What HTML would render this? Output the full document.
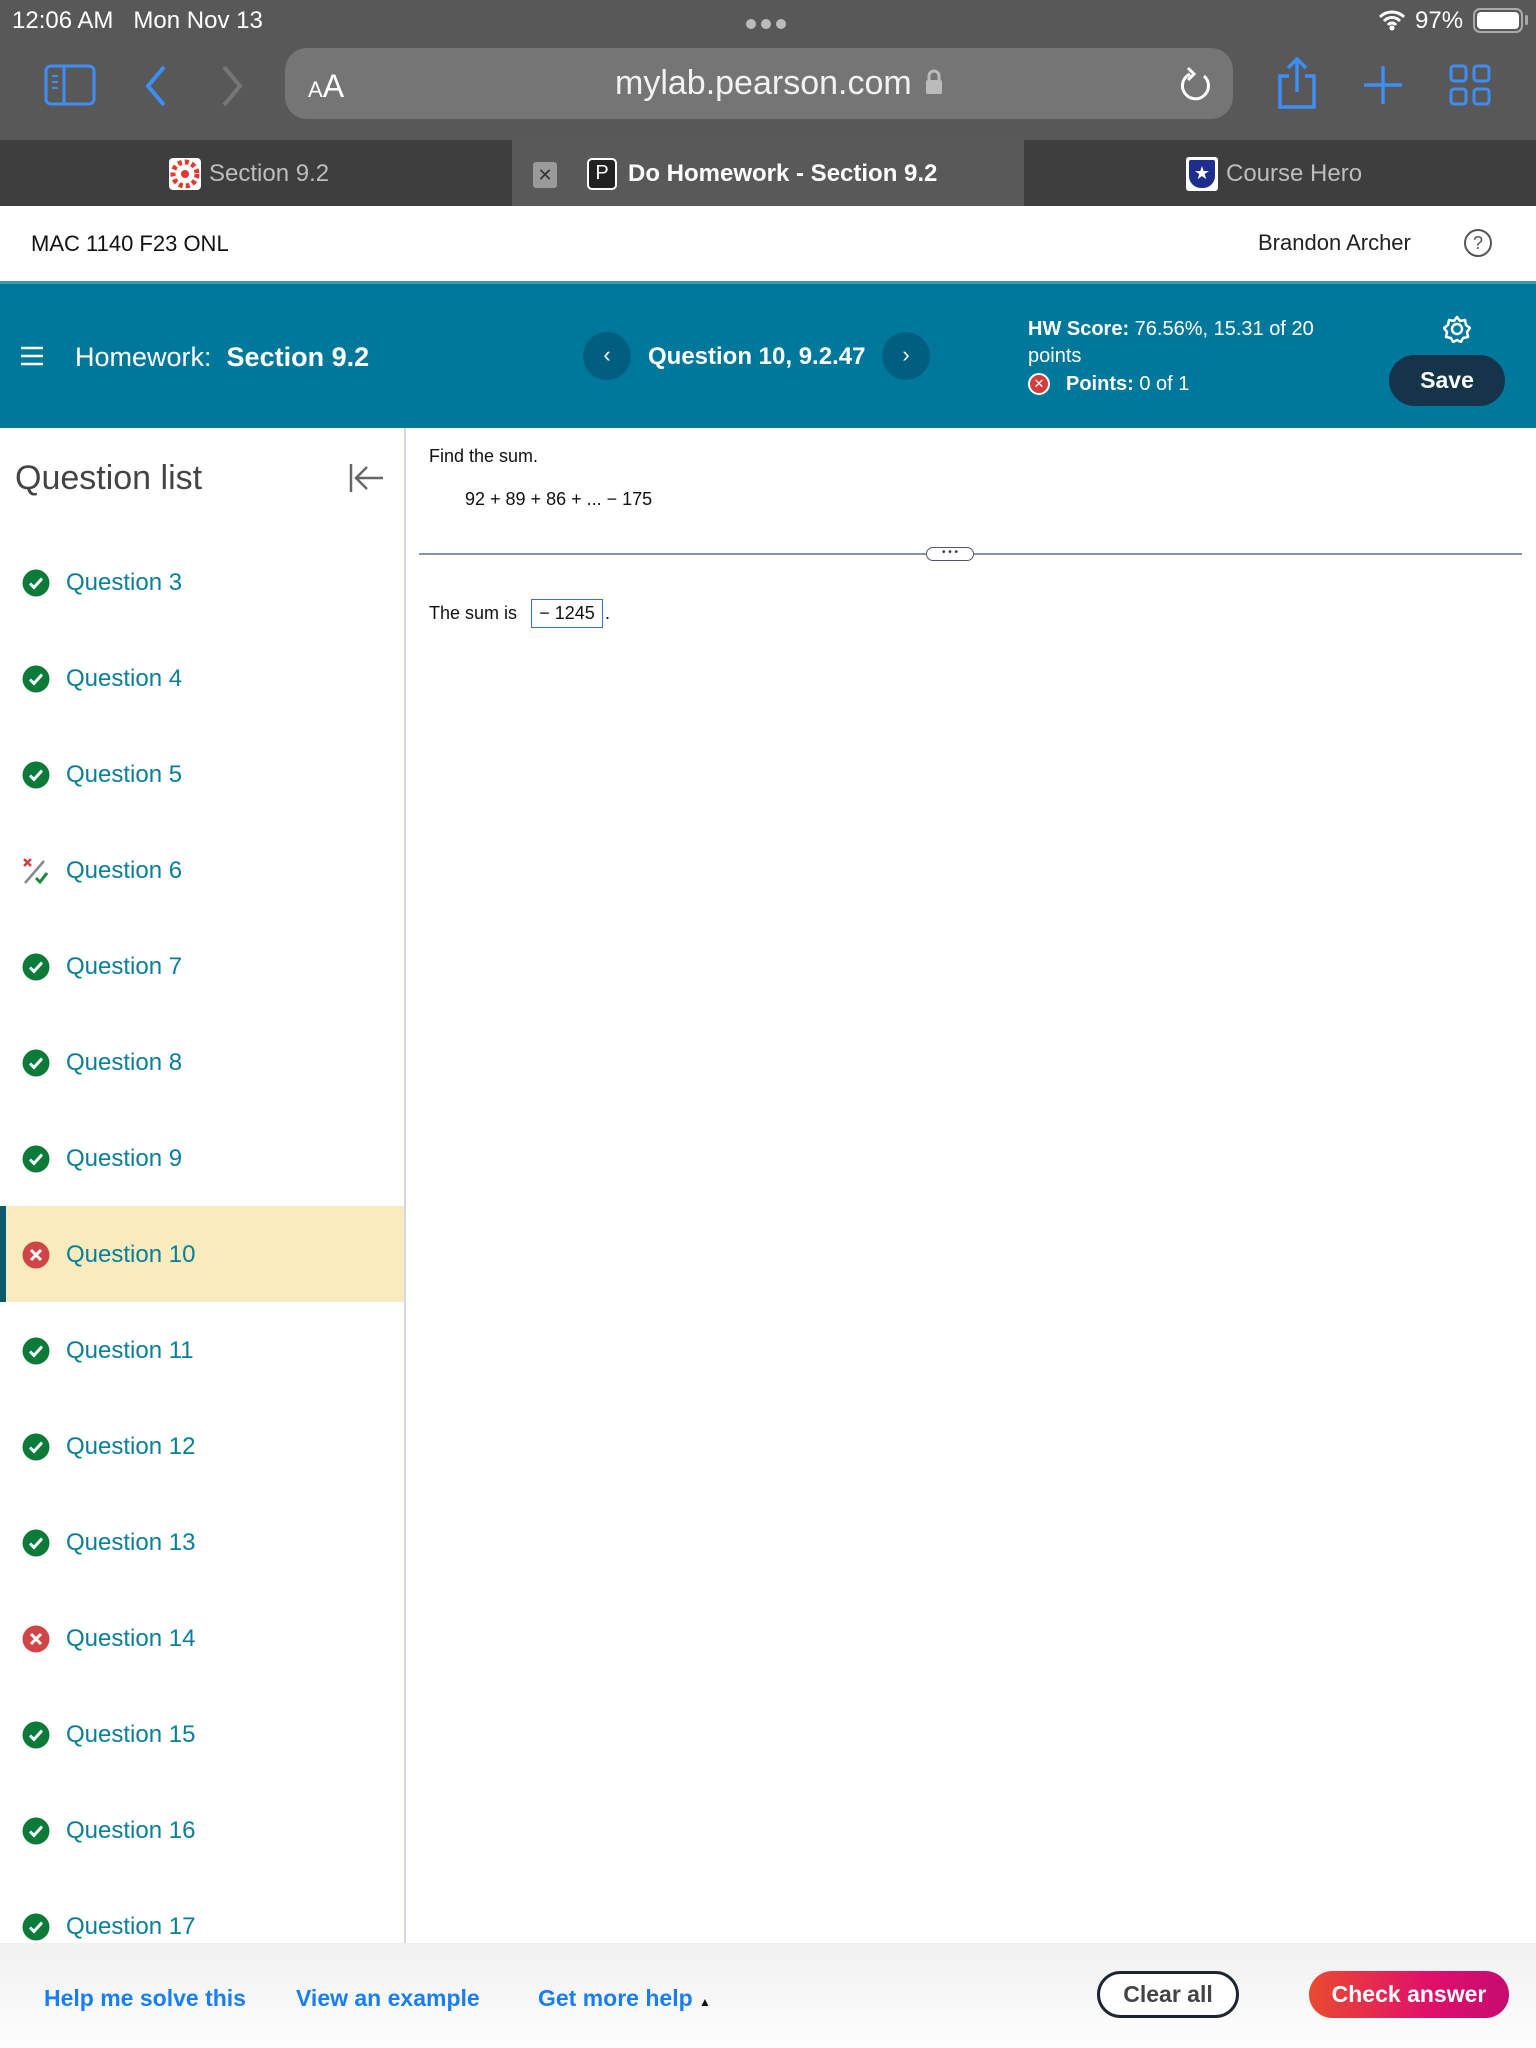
<!DOCTYPE html>
<html><head><meta charset="utf-8"><style>
*{margin:0;padding:0;box-sizing:border-box}
body{width:1536px;height:2048px;position:relative;overflow:hidden;background:#fff;font-family:"Liberation Sans",sans-serif}
.a{position:absolute;white-space:nowrap}
.q{position:absolute;left:0;width:404px;height:96px}
.q .t{position:absolute;left:66px;top:33px;font-size:24px;color:#0a7d9c;line-height:30px}
.q svg{position:absolute;left:22px;top:34px}
</style></head><body>
<div class="a" style="left:0;top:0;width:1536px;height:140px;background:#585858"></div>
<div class="a" style="left:12px;top:6px;font-size:24px;color:#fff;line-height:30px">12:06 AM&nbsp;&nbsp;&nbsp;Mon Nov 13</div>
<div class="a" style="left:746px;top:19px;width:44px;height:10px">
<span class="a" style="left:0;top:0;width:10px;height:10px;border-radius:5px;background:#bbb"></span>
<span class="a" style="left:15px;top:0;width:10px;height:10px;border-radius:5px;background:#bbb"></span>
<span class="a" style="left:30px;top:0;width:10px;height:10px;border-radius:5px;background:#bbb"></span></div>
<svg class="a" style="left:1378px;top:9px" width="28" height="22" viewBox="0 0 28 22"><path d="M2 8a17 17 0 0 1 24 0M6 12a11 11 0 0 1 16 0M10 16a5 5 0 0 1 8 0" stroke="#fff" stroke-width="3" fill="none"/><circle cx="14" cy="19" r="2.5" fill="#fff"/></svg>
<div class="a" style="left:1415px;top:6px;font-size:24px;color:#fff;line-height:30px">97%</div>
<div class="a" style="left:1473px;top:8px;width:50px;height:25px;border:2px solid #aaa;border-radius:7px"><div style="margin:2px;width:42px;height:17px;background:#fff;border-radius:4px"></div></div>
<div class="a" style="left:1525px;top:15px;width:3px;height:10px;background:#aaa;border-radius:2px"></div>
<svg class="a" style="left:44px;top:64px" width="52" height="42" viewBox="0 0 52 42"><rect x="2" y="2" width="48" height="38" rx="5" fill="none" stroke="#3e8ef7" stroke-width="3"/><line x1="20" y1="2" x2="20" y2="40" stroke="#3e8ef7" stroke-width="3"/><path d="M8 12h6M8 18h6M8 24h6" stroke="#3e8ef7" stroke-width="2"/></svg>
<svg class="a" style="left:140px;top:64px" width="30" height="44"><path d="M24 3L8 22l16 19" stroke="#3e8ef7" stroke-width="4" fill="none"/></svg>
<svg class="a" style="left:218px;top:64px" width="30" height="44"><path d="M6 3l16 19L6 41" stroke="#777" stroke-width="4" fill="none"/></svg>
<div class="a" style="left:285px;top:48px;width:948px;height:71px;background:#757575;border-radius:22px"></div>
<div class="a" style="left:308px;top:66px;color:#fff;line-height:40px"><span style="font-size:22px">A</span><span style="font-size:32px">A</span></div>
<div class="a" style="left:615px;top:62px;font-size:34px;color:#f2f2f2;line-height:42px">mylab.pearson.com</div>
<svg class="a" style="left:925px;top:68px" width="18" height="28"><path d="M4 12V8a5 5 0 0 1 10 0v4" stroke="#bbb" stroke-width="3" fill="none"/><rect x="1" y="12" width="16" height="14" rx="2" fill="#bbb"/></svg>
<svg class="a" style="left:1178px;top:64px" width="36" height="40" viewBox="0 0 36 40"><path d="M26 12A13 13 0 1 1 12 10" stroke="#fff" stroke-width="3" fill="none"/><path d="M10 4l6 6-6 6" stroke="#fff" stroke-width="3" fill="none"/></svg>
<svg class="a" style="left:1276px;top:56px" width="42" height="54" viewBox="0 0 42 54"><path d="M13 20H4v31h34V20h-9M21 36V3M12 12l9-9 9 9" stroke="#3e8ef7" stroke-width="3.5" fill="none"/></svg>
<svg class="a" style="left:1362px;top:64px" width="42" height="42"><path d="M21 2v38M2 21h38" stroke="#3e8ef7" stroke-width="3.5"/></svg>
<svg class="a" style="left:1449px;top:64px" width="42" height="42"><g fill="none" stroke="#3e8ef7" stroke-width="3"><rect x="2" y="2" width="15" height="15" rx="3"/><rect x="25" y="2" width="15" height="15" rx="3"/><rect x="2" y="25" width="15" height="15" rx="3"/><rect x="25" y="25" width="15" height="15" rx="3"/></g></svg>
<div class="a" style="left:0;top:140px;width:1536px;height:66px;background:#3e3e3e"></div>
<div class="a" style="left:512px;top:140px;width:512px;height:66px;background:#595959"></div>
<div class="a" style="left:169px;top:158px;width:32px;height:32px;background:#fff;border-radius:4px"><svg width="32" height="32"><circle cx="16" cy="16" r="12" fill="none" stroke="#e03a2f" stroke-width="5" stroke-dasharray="4 3"/><circle cx="16" cy="16" r="4" fill="#e03a2f"/></svg></div>
<div class="a" style="left:209px;top:159px;font-size:24px;color:#bdbdbd;line-height:30px">Section 9.2</div>
<div class="a" style="left:533px;top:162px;width:24px;height:26px;background:#9a9a9a;border-radius:3px;color:#333;font-size:18px;text-align:center;line-height:26px">✕</div>
<div class="a" style="left:587px;top:158px;width:30px;height:32px;border:2.5px solid #fff;border-radius:5px;background:#222;color:#fff;font-size:20px;text-align:center;line-height:27px">P</div>
<div class="a" style="left:628px;top:159px;font-size:24px;font-weight:bold;color:#fff;line-height:30px">Do Homework - Section 9.2</div>
<div class="a" style="left:1186px;top:157px;width:32px;height:34px;background:#fff;border-radius:3px"><div style="margin:3px;width:26px;height:28px;background:#1d2e8c;border-radius:2px 2px 12px 12px;color:#fff;font-size:18px;text-align:center;line-height:26px">★</div></div>
<div class="a" style="left:1226px;top:159px;font-size:24px;color:#bdbdbd;line-height:30px">Course Hero</div>
<div class="a" style="left:31px;top:230px;font-size:22px;color:#111;line-height:28px">MAC 1140 F23 ONL</div>
<div class="a" style="left:1258px;top:229px;font-size:22px;color:#222;line-height:28px">Brandon Archer</div>
<div class="a" style="left:1464px;top:229px;width:28px;height:28px;border:2px solid #555;border-radius:50%;font-size:18px;color:#555;text-align:center;line-height:24px">?</div>
<div class="a" style="left:0;top:281px;width:1536px;height:147px;background:#00789c;border-top:3px solid #3a9ab8"></div>
<svg class="a" style="left:21px;top:345px" width="22" height="22"><path d="M0 3h22M0 11h22M0 19h22" stroke="#fff" stroke-width="2.5"/></svg>
<div class="a" style="left:75px;top:341px;font-size:27px;color:#fff;line-height:32px">Homework:&nbsp; <b>Section 9.2</b></div>
<div class="a" style="left:583px;top:332px;width:48px;height:48px;border-radius:50%;background:#005f80;color:#fff;font-size:22px;text-align:center;line-height:46px">‹</div>
<div class="a" style="left:648px;top:341px;font-size:24px;font-weight:bold;color:#fff;line-height:32px">Question 10, 9.2.47</div>
<div class="a" style="left:882px;top:332px;width:48px;height:48px;border-radius:50%;background:#005f80;color:#fff;font-size:22px;text-align:center;line-height:46px">›</div>
<div class="a" style="left:1028px;top:316px;font-size:20px;color:#fff;line-height:26px"><b>HW Score:</b> 76.56%, 15.31 of 20</div>
<div class="a" style="left:1028px;top:343px;font-size:20px;color:#fff;line-height:26px">points</div>
<div class="a" style="left:1028px;top:373px;width:22px;height:22px;border-radius:50%;background:#d43d3d;border:2px solid #fff;color:#fff;font-size:13px;text-align:center;line-height:18px">✕</div>
<div class="a" style="left:1066px;top:371px;font-size:20px;color:#fff;line-height:26px"><b>Points:</b> 0 of 1</div>
<svg class="a" style="left:1443px;top:315px" width="28" height="28" viewBox="0 0 28 28"><circle cx="14" cy="14" r="5" fill="none" stroke="#fff" stroke-width="2.5"/><path d="M14 2l3 4 5-1 1 5 4 3-3 4 1 5-5 1-2 4-4-2-4 2-2-4-5-1 1-5-3-4 4-3 1-5 5 1z" fill="none" stroke="#fff" stroke-width="2.5" stroke-linejoin="round"/></svg>
<div class="a" style="left:1389px;top:355px;width:116px;height:51px;border-radius:26px;background:#15344a;color:#fff;font-size:23px;font-weight:bold;text-align:center;line-height:51px">Save</div>
<div class="a" style="left:404px;top:428px;width:2px;height:1515px;background:#d2d8e4"></div>
<div class="a" style="left:15px;top:457px;font-size:34px;color:#444;line-height:42px">Question list</div>
<svg class="a" style="left:349px;top:462px" width="36" height="32"><path d="M2 2v28M34 16H8M18 5L7 16l11 11" stroke="#666" stroke-width="2.5" fill="none"/></svg>
<div class="a" style="left:0;top:1206px;width:404px;height:96px;background:#f8ebbd;border-left:6px solid #0b5a72"></div>
<div class="q" style="top:535px"><svg width="28" height="28"><circle cx="14" cy="14" r="13.5" fill="#0d7a3a"/><path d="M8 14.5l4 4 8-9" stroke="#fff" stroke-width="3" fill="none"/></svg><div class="t">Question 3</div></div>
<div class="q" style="top:631px"><svg width="28" height="28"><circle cx="14" cy="14" r="13.5" fill="#0d7a3a"/><path d="M8 14.5l4 4 8-9" stroke="#fff" stroke-width="3" fill="none"/></svg><div class="t">Question 4</div></div>
<div class="q" style="top:727px"><svg width="28" height="28"><circle cx="14" cy="14" r="13.5" fill="#0d7a3a"/><path d="M8 14.5l4 4 8-9" stroke="#fff" stroke-width="3" fill="none"/></svg><div class="t">Question 5</div></div>
<div class="q" style="top:823px"><svg width="28" height="28"><path d="M2 2l7 7M9 2L2 9" stroke="#d43d3d" stroke-width="2.5"/><path d="M3 26L22 4" stroke="#888" stroke-width="2.5"/><path d="M14 21l4 4 7-9" stroke="#1a8a3a" stroke-width="3" fill="none"/></svg><div class="t">Question 6</div></div>
<div class="q" style="top:919px"><svg width="28" height="28"><circle cx="14" cy="14" r="13.5" fill="#0d7a3a"/><path d="M8 14.5l4 4 8-9" stroke="#fff" stroke-width="3" fill="none"/></svg><div class="t">Question 7</div></div>
<div class="q" style="top:1015px"><svg width="28" height="28"><circle cx="14" cy="14" r="13.5" fill="#0d7a3a"/><path d="M8 14.5l4 4 8-9" stroke="#fff" stroke-width="3" fill="none"/></svg><div class="t">Question 8</div></div>
<div class="q" style="top:1111px"><svg width="28" height="28"><circle cx="14" cy="14" r="13.5" fill="#0d7a3a"/><path d="M8 14.5l4 4 8-9" stroke="#fff" stroke-width="3" fill="none"/></svg><div class="t">Question 9</div></div>
<div class="q" style="top:1207px"><svg width="28" height="28"><circle cx="14" cy="14" r="13.5" fill="#d04545"/><path d="M9 9l10 10M19 9L9 19" stroke="#fff" stroke-width="3"/></svg><div class="t">Question 10</div></div>
<div class="q" style="top:1303px"><svg width="28" height="28"><circle cx="14" cy="14" r="13.5" fill="#0d7a3a"/><path d="M8 14.5l4 4 8-9" stroke="#fff" stroke-width="3" fill="none"/></svg><div class="t">Question 11</div></div>
<div class="q" style="top:1399px"><svg width="28" height="28"><circle cx="14" cy="14" r="13.5" fill="#0d7a3a"/><path d="M8 14.5l4 4 8-9" stroke="#fff" stroke-width="3" fill="none"/></svg><div class="t">Question 12</div></div>
<div class="q" style="top:1495px"><svg width="28" height="28"><circle cx="14" cy="14" r="13.5" fill="#0d7a3a"/><path d="M8 14.5l4 4 8-9" stroke="#fff" stroke-width="3" fill="none"/></svg><div class="t">Question 13</div></div>
<div class="q" style="top:1591px"><svg width="28" height="28"><circle cx="14" cy="14" r="13.5" fill="#d04545"/><path d="M9 9l10 10M19 9L9 19" stroke="#fff" stroke-width="3"/></svg><div class="t">Question 14</div></div>
<div class="q" style="top:1687px"><svg width="28" height="28"><circle cx="14" cy="14" r="13.5" fill="#0d7a3a"/><path d="M8 14.5l4 4 8-9" stroke="#fff" stroke-width="3" fill="none"/></svg><div class="t">Question 15</div></div>
<div class="q" style="top:1783px"><svg width="28" height="28"><circle cx="14" cy="14" r="13.5" fill="#0d7a3a"/><path d="M8 14.5l4 4 8-9" stroke="#fff" stroke-width="3" fill="none"/></svg><div class="t">Question 16</div></div>
<div class="q" style="top:1879px"><svg width="28" height="28"><circle cx="14" cy="14" r="13.5" fill="#0d7a3a"/><path d="M8 14.5l4 4 8-9" stroke="#fff" stroke-width="3" fill="none"/></svg><div class="t">Question 17</div></div>
<div class="a" style="left:429px;top:444px;font-size:18px;color:#111;line-height:24px">Find the sum.</div>
<div class="a" style="left:465px;top:487px;font-size:18px;color:#111;line-height:24px">92 + 89 + 86 + ... − 175</div>
<div class="a" style="left:419px;top:553px;width:1103px;height:1.5px;background:#8a94a6"></div>
<div class="a" style="left:926px;top:547px;width:48px;height:14px;border:1.5px solid #556;border-radius:7px;background:#fff;font-size:10px;text-align:center;line-height:9px;color:#333">• • •</div>
<div class="a" style="left:429px;top:601px;font-size:18px;color:#111;line-height:24px">The sum is</div>
<div class="a" style="left:531px;top:599px;width:72px;height:29px;border:1.5px solid #3a6fd8;font-size:18px;color:#111;text-align:center;line-height:26px">− 1245</div>
<div class="a" style="left:605px;top:601px;font-size:18px;color:#111;line-height:24px">.</div>
<div class="a" style="left:0;top:1943px;width:1536px;height:105px;background:linear-gradient(#f1f1f1,#fdfdfd)"></div>
<div class="a" style="left:44px;top:1983px;font-size:23px;font-weight:bold;color:#1a7ef2;line-height:30px">Help me solve this</div>
<div class="a" style="left:296px;top:1983px;font-size:23px;font-weight:bold;color:#1a7ef2;line-height:30px">View an example</div>
<div class="a" style="left:538px;top:1983px;font-size:23px;font-weight:bold;color:#1a7ef2;line-height:30px">Get more help <span style="color:#111;font-size:12px">▲</span></div>
<div class="a" style="left:1097px;top:1971px;width:142px;height:47px;border:3px solid #1d2533;border-radius:24px;background:#fff;font-size:23px;font-weight:bold;color:#444;text-align:center;line-height:41px">Clear all</div>
<div class="a" style="left:1309px;top:1971px;width:200px;height:47px;border-radius:24px;background:linear-gradient(90deg,#ea4a30,#e0106a 60%,#c50b70);font-size:23px;font-weight:bold;color:#fff;text-align:center;line-height:47px">Check answer</div>
</body></html>
